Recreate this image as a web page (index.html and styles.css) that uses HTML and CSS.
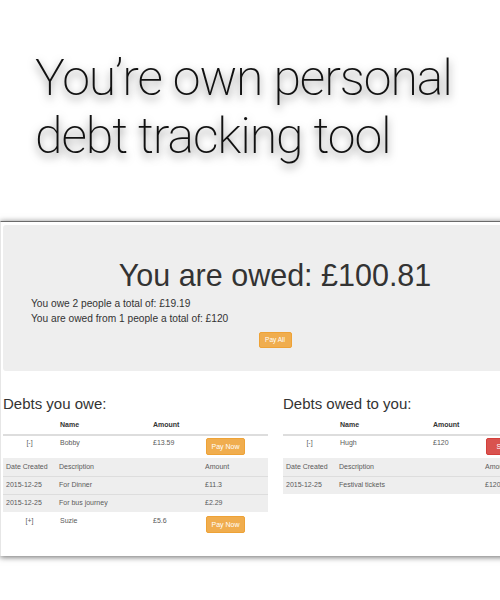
FILE: index.html
```html
<!DOCTYPE html>
<html>
<head>
<meta charset="utf-8">
<title>Debt tracker</title>
<link rel="stylesheet" href="styles.css">
</head>
<body>
<h1 class="hero">You’re own personal<br>debt tracking tool</h1>
<div class="frame">
  <div class="jumbo">
    <h2 class="owed">You are owed: £100.81</h2>
    <p class="summary">You owe 2 people a total of: £19.19<br>You are owed from 1 people a total of: £120</p>
    <div class="center"><button class="btn btn-warning btn-all">Pay All</button></div>
  </div>
  <div class="cols">
    <section class="col">
      <h3 class="col-title">Debts you owe:</h3>
      <table class="debts">
        <colgroup><col class="c1"><col class="c2"><col class="c3"><col class="c4"></colgroup>
        <thead><tr><th></th><th>Name</th><th>Amount</th><th></th></tr></thead>
        <tbody>
          <tr class="main"><td class="toggle">[-]</td><td>Bobby</td><td>£13.59</td><td><button class="btn btn-warning">Pay Now</button></td></tr>
          <tr class="sub"><td>Date Created</td><td>Description</td><td></td><td>Amount</td></tr>
          <tr class="sub"><td>2015-12-25</td><td>For Dinner</td><td></td><td>£11.3</td></tr>
          <tr class="sub"><td>2015-12-25</td><td>For bus journey</td><td></td><td>£2.29</td></tr>
          <tr class="main"><td class="toggle">[+]</td><td>Suzie</td><td>£5.6</td><td><button class="btn btn-warning">Pay Now</button></td></tr>
        </tbody>
      </table>
    </section>
    <section class="col">
      <h3 class="col-title">Debts owed to you:</h3>
      <table class="debts">
        <colgroup><col class="c1"><col class="c2"><col class="c3"><col class="c4"></colgroup>
        <thead><tr><th></th><th>Name</th><th>Amount</th><th></th></tr></thead>
        <tbody>
          <tr class="main"><td class="toggle">[-]</td><td>Hugh</td><td>£120</td><td><button class="btn btn-danger">Settle</button></td></tr>
          <tr class="sub"><td>Date Created</td><td>Description</td><td></td><td>Amount</td></tr>
          <tr class="sub"><td>2015-12-25</td><td>Festival tickets</td><td></td><td>£120</td></tr>
        </tbody>
      </table>
    </section>
  </div>
</div>
</body>
</html>
```
FILE: styles.css
```css
html, body {
  margin: 0;
  padding: 0;
  overflow: hidden;
  background: #fff;
}
body {
  width: 500px;
  height: 600px;
}
.hero {
  margin: 0;
  padding: 49px 0 0 35px;
  font-family: Roboto, "Open Sans", sans-serif;
  font-weight: 200;
  font-size: 50px;
  line-height: 58px;
  letter-spacing: -1.1px;
  color: #111;
  white-space: nowrap;
  text-shadow: 0 4px 9px rgba(0, 0, 0, 0.55);
}
.frame {
  box-sizing: border-box;
  margin-top: 56px;
  width: 560px;
  height: 335px;
  border-top: 1px solid #6a6a6a;
  border-left: 1px solid #e6e6e6;
  padding: 3px 0 0 2px;
  box-shadow: 0 1px 6px rgba(0, 0, 0, 0.6);
  font-family: "Liberation Sans", Arial, sans-serif;
  color: #333;
  background: #fff;
}
.jumbo {
  width: 544px;
  box-sizing: border-box;
  background: #eee;
  border-radius: 3px;
  padding: 33px 28px 23px;
}
.owed {
  margin: 0 0 3px;
  font-size: 30.5px;
  line-height: 35px;
  font-weight: 400;
  text-align: center;
  color: #333;
}
.summary {
  margin: 0;
  font-size: 10.2px;
  line-height: 15px;
}
.center {
  margin-top: 6px;
  text-align: center;
  line-height: 0;
}
.btn {
  display: inline-block;
  box-sizing: border-box;
  padding: 0;
  height: 17px;
  width: 39px;
  font-family: "Liberation Sans", Arial, sans-serif;
  font-size: 7px;
  line-height: 15px;
  color: #fff;
  border-radius: 2px;
  cursor: pointer;
  vertical-align: top;
}
.btn-warning {
  background: #f0ad4e;
  border: 1px solid #eea236;
}
.btn-danger {
  background: #d9534f;
  border: 1px solid #d43f3a;
}
.btn-all {
  width: 33px;
  height: 16px;
  font-size: 6.5px;
  line-height: 14px;
}
.cols {
  display: grid;
  grid-template-columns: 265px 265px;
  column-gap: 15px;
  margin-top: 25px;
}
.col-title {
  margin: 0 0 3.5px;
  font-size: 15px;
  line-height: 16.5px;
  font-weight: 400;
  color: #333;
}
.debts {
  width: 265px;
  table-layout: fixed;
  border-collapse: collapse;
  font-size: 7px;
  line-height: 10px;
  color: #5a5a5a;
}
.c1 { width: 53px; }
.c2 { width: 93px; }
.c3 { width: 53px; }
.c4 { width: 66px; }
.debts th {
  padding: 4px;
  text-align: left;
  font-weight: 700;
  color: #333;
  border-bottom: 2px solid #ddd;
}
.main td {
  padding: 2px 4px 3px;
  vertical-align: top;
}
.main td.toggle {
  text-align: center;
}
.sub td {
  background: #eee;
  padding: 4px 4px 4px 3px;
  vertical-align: top;
}
.sub + .sub td {
  border-top: 1px solid #ddd;
  padding-top: 3px;
}
.sub + .main td {
  padding-top: 4px;
}
```
